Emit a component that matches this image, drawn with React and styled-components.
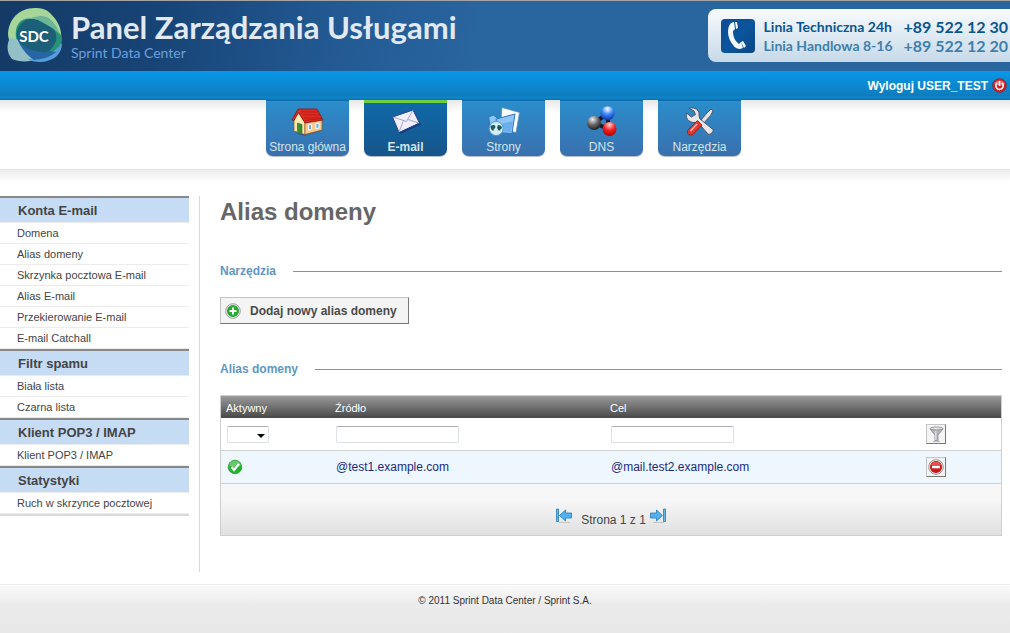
import React from "react";
import styled, { createGlobalStyle, css } from "styled-components";

const sans = '"Liberation Sans", Arial, sans-serif';
const brand = 'Lato, "Open Sans", sans-serif';

const GlobalStyle = createGlobalStyle`
  *, *::before, *::after { box-sizing: border-box; }
  body { margin: 0; background: #fff; color: #444; font: 12px/16px ${sans}; }
  a { color: inherit; text-decoration: none; }
  svg { display: block; flex: none; }
`;

const Page = styled.div`
  min-height: 100vh;
  display: flex;
  flex-direction: column;
`;

const Header = styled.header`
  height: 71px;
  border-top: 1px solid #a3a3a3;
  background: linear-gradient(100deg, #143a66 0, #174476 160px, #235a94 340px, #29659f 480px);
  display: flex;
  justify-content: space-between;
`;

const Brand = styled.a`
  display: flex;
  gap: 8px;
  padding: 6px 0 0 7px;
`;

const BrandText = styled.span`
  display: flex;
  flex-direction: column;
  padding-top: 3px;
`;

const BrandName = styled.span`
  color: #e2e9f3;
  font: 700 31px/35px ${brand};
  white-space: nowrap;
`;

const BrandSub = styled.span`
  color: #6d9fdb;
  font: 400 14px/16px ${brand};
  white-space: nowrap;
`;

const Contact = styled.div`
  height: 53px;
  margin-top: 8px;
  padding: 0 2px 0 13px;
  border-radius: 8px 0 0 8px;
  background: linear-gradient(#f8fbfd, #c6d9e8);
  display: flex;
  align-items: center;
  gap: 9px;
`;

const Lines = styled.dl`
  margin: 0;
  display: grid;
  grid-template-columns: auto auto;
  column-gap: 11px;
  white-space: nowrap;
`;

const LineName = styled.dt`
  color: ${(p) => (p.$soft ? "#3f7fab" : "#0a5590")};
  font: 700 14px/19px ${brand};
`;

const LineNumber = styled.dd`
  margin: 0;
  color: ${(p) => (p.$soft ? "#3f7fab" : "#0a5590")};
  font: 700 16px/19px ${brand};
`;

const UserBar = styled.div`
  height: 29px;
  padding: 0 3px;
  background: linear-gradient(#0798e8, #0f7cbd 86%, #0e86cd 92%, #0a6fae);
  display: flex;
  align-items: center;
  justify-content: flex-end;
`;

const Logout = styled.a`
  color: #fff;
  font-weight: 700;
  display: flex;
  align-items: center;
  gap: 4px;
`;

const Nav = styled.nav`
  height: 70px;
  padding-right: 3px;
  border-bottom: 1px solid #e2e2e2;
  background: linear-gradient(#e6e6e6, #fff 12px);
  display: flex;
  justify-content: center;
  align-items: flex-start;
  gap: 15px;
`;

const Tab = styled.a`
  width: 83px;
  height: 57px;
  padding-top: 5px;
  border-top: 1px solid #0f6fae;
  border-bottom: 1px solid #b4bfcb;
  border-radius: 0 0 7px 7px;
  background: linear-gradient(#2a8dcb, #3a70ae);
  color: #d3e4ea;
  display: flex;
  flex-direction: column;
  align-items: center;
  gap: 1px;
  white-space: nowrap;
  ${(p) =>
    p.$active &&
    css`
      padding-top: 3px;
      border-top: 3px solid #6fcf42;
      background: linear-gradient(#0f6aa8, #17548a);
      font-weight: 700;
    `}
`;

const Body = styled.div`
  padding: 26px 8px 12px 0;
  background: linear-gradient(#ececec, #fff 12px);
  display: flex;
`;

const Sidebar = styled.aside`
  width: 200px;
  min-height: 376px;
  padding-right: 10px;
  border-right: 1px solid #d9d9d9;
  flex: none;
`;

const Menu = styled.nav`
  border-bottom: 2px solid #d9d9d9;
`;

const MenuTitle = styled.h2`
  height: 27px;
  margin: 0;
  padding-left: 18px;
  border-top: 2px solid #888;
  border-bottom: 1px solid #ececec;
  background: #c5dcf4;
  font-size: 13px;
  line-height: 25px;
`;

const MenuList = styled.ul`
  margin: 0;
  padding: 0;
  list-style: none;
`;

const MenuItem = styled.li`
  height: 21px;
  padding-left: 17px;
  border-bottom: 1px solid #ececec;
  font-size: 11px;
  line-height: 21px;
`;

const Main = styled.main`
  flex: 1;
  min-width: 0;
  padding-left: 20px;
`;

const Title = styled.h1`
  margin: 0 0 35px;
  color: #666;
  font-size: 24px;
  line-height: 32px;
`;

const SectionTitle = styled.h2`
  margin: 0;
  color: #6096c6;
  font-size: 12px;
  line-height: 16px;
  display: flex;
  align-items: center;
  gap: 17px;
  &::after {
    content: "";
    height: 1px;
    background: #6699c4;
    flex: 1;
  }
`;

const AddButton = styled.button`
  height: 27px;
  margin: 18px 0 37px;
  padding: 0 11px 0 4px;
  border: 1px solid;
  border-color: #c4c4c4 #777 #777 #c4c4c4;
  background: #f4f4f4;
  color: #4a4a4a;
  font: 700 12px/16px ${sans};
  display: flex;
  align-items: center;
  gap: 9px;
`;

const Grid = styled.table`
  width: 100%;
  margin-top: 18px;
  border: 1px solid #cfcfcf;
  border-spacing: 0;
  table-layout: fixed;
  text-align: left;
`;

const Col = styled.col`
  width: ${(p) => p.$w};
`;

const HeadRow = styled.tr`
  height: 22px;
  background: linear-gradient(#9a9a9a, #484848);
  color: #fff;
`;

const HeadCell = styled.th`
  padding: 2px 5px 0;
  font-size: 11px;
  line-height: 16px;
  font-weight: 400;
`;

const Row = styled.tr`
  height: 33px;
  background: ${(p) => (p.$tinted ? "#eef6fe" : "#fff")};
`;

const Cell = styled.td`
  padding: 0 5px 0 6px;
  border-bottom: 1px solid #cfcfcf;
  color: #1a2b7c;
`;

const ActionCell = styled(Cell)`
  padding-left: 5px;
`;

const PagerCell = styled.td`
  height: 51px;
  padding: 16px 0 0;
  background: linear-gradient(#f7f7f7 30%, #e0e0e0);
`;

const Pager = styled.div`
  display: flex;
  justify-content: center;
  gap: 4px;
`;

const PagerText = styled.span`
  padding: 4px 0 0 5px;
`;

const field = css`
  height: 17px;
  border: 1px solid #dde0e8;
  border-top-color: #abadb3;
  border-radius: 2px;
  background: #fff;
  font: 11px/13px ${sans};
  display: block;
`;

const TextField = styled.input`
  ${field}
  width: 123px;
  padding: 0 3px;
`;

const SelectBox = styled.span`
  width: 42px;
  display: block;
  position: relative;
  svg { position: absolute; right: 4px; bottom: 4px; pointer-events: none; }
`;

const Select = styled.select`
  ${field}
  width: 100%;
  padding: 0 12px 0 3px;
  appearance: none;
`;

const IconButton = styled.button`
  width: 20px;
  height: 20px;
  padding: 0;
  border: 1px solid;
  border-color: #c4c4c4 #777 #777 #c4c4c4;
  background: #f4f4f4;
  display: flex;
  align-items: center;
  justify-content: center;
`;

const Footer = styled.footer`
  flex: 1;
  padding: 9px 0;
  border-top: 1px solid #ececec;
  background: linear-gradient(#fff 1px, #f9f9f9 1px, #ebebeb 20px, #e8e8e8);
  color: #333;
  font-size: 10px;
  line-height: 14px;
  text-align: center;
`;

const Logo = () => (
  <svg width="56" height="56" viewBox="0 0 56 56" aria-hidden="true">
    <path d="M1 26C2 12 12 1 28 1c6 0 11 1 15 5 6 6 10 12 11 20 1 9 0 14-3 18L40 49 12 45C4 38 1 34 1 26z" fill="#a6d698" />
    <path d="M9 26C10 18 13 12 22 11c5 0 7-2 12-2 8 0 12 6 15 10l5 10c1 9-4 16-10 18L15 46c-4-6-6-13-6-20z" fill="#6db597" />
    <path d="M12 16c4-5 10-5 17-3 9 3 17 8 25 15 2 8-2 16-9 19L21 48 10 36c-2-8-2-15 2-20z" fill="#29937a" />
    <path d="M3 31c9 0 19 6 26 22-8 2-18 2-24-1-5-5-6-14-2-21z" fill="#93bfc6" />
    <path d="M55 36c0 12-9 18-21 19-6 0-11-1-13-3 14-1 26-5 34-16z" fill="#559edb" />
    <path d="M9 27c8 8 22 15 40 18-7 6-14 7-22 8-7-4-17-17-18-26z" fill="#2766a5" />
    <path d="M17 14c5-3 10-2 14-1l14 8c4 3 5 8 4 13-2 5-5 9-9 11-8 1-17-2-24-6-5-5-7-10-6-15 1-4 4-8 7-10z" fill="#1b5f78" />
    <text x="27" y="35" textAnchor="middle" fill="#fff" fontFamily="Lato, sans-serif" fontWeight="700" fontSize="15">SDC</text>
  </svg>
);

const PhoneIcon = () => (
  <svg width="34" height="34" viewBox="0 0 34 34" aria-hidden="true">
    <defs>
      <linearGradient id="phone" x1="0" y1="0" x2="1" y2="1">
        <stop offset="0" stopColor="#0b4c94" />
        <stop offset=".5" stopColor="#0b559c" />
        <stop offset="1" stopColor="#0a4684" />
      </linearGradient>
    </defs>
    <rect width="34" height="34" rx="4" fill="url(#phone)" />
    <path d="M10 4l3-1 1 7-2 2c0 6 2 10 6 13l2-2 2 6-3 1c-2 0-5-1-7-4-3-4-5-8-5-13 0-4 1-7 3-9zM14 3h2l1 6-2 1zM20 23l2-1 3 5-2 2z" fill="#f4f8fc" />
  </svg>
);

const PowerIcon = () => (
  <svg width="15" height="15" viewBox="0 0 15 15" aria-hidden="true">
    <circle cx="7.500" cy="7.500" r="6.800" fill="#cf2229" stroke="#8c2a30" />
    <path d="M2 6a6 6 0 0 1 11 0c-3 2-8 2-11 0z" fill="#e86d6d" />
    <path d="M5 5a3.700 3.700 0 1 0 5 0M7.500 3v5" fill="none" stroke="#fff" strokeWidth="1.600" />
  </svg>
);

const HomeIcon = () => (
  <svg width="34" height="32" viewBox="0 0 34 32" aria-hidden="true">
    <path d="M4 27l9 3 17-5v-3z" fill="#143a66" opacity=".4" />
    <path d="M3 13l4-7 7 10v12.500L3 25z" fill="#ffe9b4" stroke="#8a5424" strokeWidth=".7" />
    <path d="M14 16l17-3v11l-17 4.500z" fill="#fbc98a" stroke="#8a5424" strokeWidth=".7" />
    <path d="M7 3h19l6 11-18 3L7.500 6.500 3 14.500 1 14z" fill="#df2b20" stroke="#7d1610" strokeWidth=".8" />
    <path d="M10 6h17M12 9h17M13 12h17M14 14.500l17-2" stroke="#a81812" strokeWidth=".7" />
    <path d="M6.500 17l4.500 1.500v8.500l-4.500-1.500z" fill="#37902a" stroke="#256a1b" strokeWidth=".6" />
    <path d="M17.500 19l3-.6v5l-3 .7zM25 17.600l3-.6v5l-3 .7z" fill="#5bb2ef" stroke="#fff" strokeWidth=".9" />
  </svg>
);

const MailIcon = () => (
  <svg width="34" height="32" viewBox="0 0 34 32" aria-hidden="true">
    <path d="M4.500 12L25 5l7 13.500L11 28z" fill="#10245f" opacity=".6" />
    <path d="M3.500 11L24 4l6.500 13L10 26.500z" fill="#f0effb" stroke="#24409b" />
    <path d="M4 11l13.500 4.500L24 4M10 26l4.500-11.500M30 17l-11-3.500" fill="none" stroke="#9a9fce" strokeWidth=".9" />
  </svg>
);

const PagesIcon = () => (
  <svg width="34" height="32" viewBox="0 0 34 32" aria-hidden="true">
    <path d="M15 1.500l17.500 5-3.500 20-16-3z" fill="#fff" stroke="#5a8fc0" strokeWidth=".8" />
    <path d="M1.500 11l5-2 3 2.500 5-.5v16l-10 1z" fill="#8bc5f7" stroke="#2a6fc0" />
    <path d="M9 13l19-5-3 19.500-14-1z" fill="#8fc6f8" stroke="#2f74c4" />
    <path d="M13 18l13-3-2 11-10-1z" fill="#4e9ae6" opacity=".55" />
    <circle cx="9.200" cy="22.500" r="7" fill="#d4edf7" stroke="#4b9cc8" />
    <path d="M3.500 20c3-2 5-1 5 1-1 2-2 2-2 4-2-1-3-2-3-5zM11 19c2 0 4 1 4 3l-3 3-2-3z" fill="#1c5a60" />
  </svg>
);

const DnsIcon = () => (
  <svg width="34" height="32" viewBox="0 0 34 32" aria-hidden="true">
    <defs>
      <radialGradient id="black" cx=".4" cy=".25" r=".8"><stop offset="0" stopColor="#eee" /><stop offset=".5" stopColor="#666" /><stop offset="1" stopColor="#161616" /></radialGradient>
      <radialGradient id="blue" cx=".5" cy=".2" r=".8"><stop offset="0" stopColor="#fff" /><stop offset=".5" stopColor="#3d86f5" /><stop offset="1" stopColor="#0a2eb0" /></radialGradient>
      <radialGradient id="red" cx=".5" cy=".2" r=".8"><stop offset="0" stopColor="#ffd5d0" /><stop offset=".5" stopColor="#f32020" /><stop offset="1" stopColor="#b00000" /></radialGradient>
    </defs>
    <path d="M9 17L22 8l2 15z" fill="none" stroke="#151c26" strokeWidth="4" />
    <circle cx="9" cy="17" r="7" fill="url(#black)" />
    <circle cx="22.500" cy="7.200" r="7" fill="url(#blue)" />
    <circle cx="24.500" cy="23" r="7" fill="url(#red)" />
  </svg>
);

const ToolsIcon = () => (
  <svg width="34" height="32" viewBox="0 0 34 32" aria-hidden="true">
    <path d="M28 3l2 2-2.500 4.500L19 19l-3-2.500 8-9.500z" fill="#e2e2e4" stroke="#444c5c" strokeWidth=".8" />
    <path d="M6 2c6-1 11 2 10 8l1 3 13 10.500c1 2-3 6-5 4.500L14.500 16C8 18 2 14 3.500 7l5 4 4-2.500L11 5z" fill="#e6e5ec" stroke="#444c5c" strokeWidth=".9" />
    <path d="M14.500 14.500l4.500 4.500-9 9.500c-3 2-7-1-5-4.500z" fill="#e23a30" stroke="#8d1712" strokeWidth=".8" />
    <path d="M14 18l-6.500 7" stroke="#f7b5af" strokeWidth="1.800" />
  </svg>
);

const PlusIcon = () => (
  <svg width="16" height="16" viewBox="0 0 16 16" aria-hidden="true">
    <circle cx="8" cy="8" r="7.300" fill="#e7e7e7" stroke="#a3a3a3" />
    <circle cx="8" cy="8" r="5.600" fill="#22b02c" stroke="#188a20" strokeWidth=".6" />
    <path d="M8 4.500v7M4.500 8h7" stroke="#fff" strokeWidth="2" />
  </svg>
);

const CheckIcon = () => (
  <svg width="16" height="16" viewBox="0 0 16 16" role="img" aria-label="Aktywny">
    <circle cx="8" cy="8" r="6.800" fill="#1fb32a" stroke="#23902e" strokeWidth=".7" />
    <path d="M2 6.500a6.200 6.200 0 0 1 12 0c-4 2-8 2-12 0z" fill="#69c86b" />
    <path d="M4.500 8l2.500 3 5-6" fill="none" stroke="#fff" strokeWidth="2.200" />
  </svg>
);

const FunnelIcon = () => (
  <svg width="16" height="16" viewBox="0 0 16 16" aria-hidden="true">
    <path d="M2 3l5 6v6h3V9l5-6z" fill="#b5b5bd" stroke="#85858c" strokeWidth=".8" />
    <ellipse cx="8.500" cy="2.500" rx="6.500" ry="1.500" fill="#e2e2e6" stroke="#85858c" strokeWidth=".8" />
    <path d="M7.800 5v9" stroke="#ececf0" />
    <path d="M5 15.500h7" stroke="#bbb" />
  </svg>
);

const RemoveIcon = () => (
  <svg width="16" height="16" viewBox="0 0 16 16" aria-hidden="true">
    <circle cx="8" cy="8" r="7.300" fill="#e6e2e2" stroke="#a09a9a" />
    <circle cx="8" cy="8" r="6" fill="#cd1719" />
    <path d="M2.500 6a6 6 0 0 1 11 0z" fill="#e05252" />
    <path d="M4 8h8" stroke="#fff" strokeWidth="2.600" />
  </svg>
);

const EdgeArrow = ({ last }) => (
  <svg width="16" height="16" viewBox="0 0 16 16" aria-hidden="true">
    <g transform={last ? "matrix(-1 0 0 1 16 0)" : undefined} stroke="#2479b8" strokeWidth=".8">
      <path d="M.5 1h2v12.500h-2z" fill="#64b8ee" />
      <path d="M3.500 7.500L9.500 2v3h6v5h-6v3z" fill="#4fb3f3" />
    </g>
    <path d="M3 14.500h11" stroke="#bbb" strokeWidth=".8" />
  </svg>
);

const TABS = [
  { label: "Strona główna", Icon: HomeIcon },
  { label: "E-mail", Icon: MailIcon, active: true },
  { label: "Strony", Icon: PagesIcon },
  { label: "DNS", Icon: DnsIcon },
  { label: "Narzędzia", Icon: ToolsIcon },
];

const MENU = [
  { title: "Konta E-mail", items: ["Domena", "Alias domeny", "Skrzynka pocztowa E-mail", "Alias E-mail", "Przekierowanie E-mail", "E-mail Catchall"] },
  { title: "Filtr spamu", items: ["Biała lista", "Czarna lista"] },
  { title: "Klient POP3 / IMAP", items: ["Klient POP3 / IMAP"] },
  { title: "Statystyki", items: ["Ruch w skrzynce pocztowej"] },
];

const ALIASES = [{ source: "@test1.example.com", target: "@mail.test2.example.com" }];

export default function App() {
  return (
    <Page>
      <GlobalStyle />
      <Header>
        <Brand href="#">
          <Logo />
          <BrandText>
            <BrandName>Panel Zarządzania Usługami</BrandName>
            <BrandSub>Sprint Data Center</BrandSub>
          </BrandText>
        </Brand>
        <Contact>
          <PhoneIcon />
          <Lines>
            <LineName>Linia Techniczna 24h</LineName>
            <LineNumber>+89 522 12 30</LineNumber>
            <LineName $soft>Linia Handlowa 8-16</LineName>
            <LineNumber $soft>+89 522 12 20</LineNumber>
          </Lines>
        </Contact>
      </Header>
      <UserBar>
        <Logout href="#">
          Wyloguj USER_TEST
          <PowerIcon />
        </Logout>
      </UserBar>
      <Nav>
        {TABS.map(({ label, Icon, active }) => (
          <Tab key={label} href="#" $active={active}>
            <Icon />
            <span>{label}</span>
          </Tab>
        ))}
      </Nav>
      <Body>
        <Sidebar>
          <Menu>
            {MENU.map(({ title, items }) => (
              <React.Fragment key={title}>
                <MenuTitle>{title}</MenuTitle>
                <MenuList>
                  {items.map((item) => (
                    <MenuItem key={item}>
                      <a href="#">{item}</a>
                    </MenuItem>
                  ))}
                </MenuList>
              </React.Fragment>
            ))}
          </Menu>
        </Sidebar>
        <Main>
          <Title>Alias domeny</Title>
          <SectionTitle>Narzędzia</SectionTitle>
          <AddButton type="button">
            <PlusIcon />
            Dodaj nowy alias domeny
          </AddButton>
          <SectionTitle>Alias domeny</SectionTitle>
          <Grid>
            <colgroup>
              <Col $w="109px" />
              <Col $w="275px" />
              <Col $w="auto" />
              <Col $w="80px" />
            </colgroup>
            <thead>
              <HeadRow>
                <HeadCell>Aktywny</HeadCell>
                <HeadCell>Źródło</HeadCell>
                <HeadCell>Cel</HeadCell>
                <HeadCell />
              </HeadRow>
            </thead>
            <tbody>
              <Row>
                <Cell>
                  <SelectBox>
                    <Select aria-label="Aktywny" />
                    <svg width="8" height="5" viewBox="0 0 8 5" aria-hidden="true">
                      <path d="M0 0h8L4 4z" fill="#000" />
                    </svg>
                  </SelectBox>
                </Cell>
                <Cell><TextField aria-label="Źródło" /></Cell>
                <Cell><TextField aria-label="Cel" /></Cell>
                <ActionCell>
                  <IconButton type="button" aria-label="Filtruj"><FunnelIcon /></IconButton>
                </ActionCell>
              </Row>
              {ALIASES.map(({ source, target }) => (
                <Row key={source} $tinted>
                  <Cell><CheckIcon /></Cell>
                  <Cell><a href="#">{source}</a></Cell>
                  <Cell><a href="#">{target}</a></Cell>
                  <ActionCell>
                    <IconButton type="button" aria-label="Usuń"><RemoveIcon /></IconButton>
                  </ActionCell>
                </Row>
              ))}
            </tbody>
            <tfoot>
              <tr>
                <PagerCell colSpan={4}>
                  <Pager>
                    <a href="#" aria-label="Pierwsza strona"><EdgeArrow /></a>
                    <PagerText>Strona 1 z 1</PagerText>
                    <a href="#" aria-label="Ostatnia strona"><EdgeArrow last /></a>
                  </Pager>
                </PagerCell>
              </tr>
            </tfoot>
          </Grid>
        </Main>
      </Body>
      <Footer>© 2011 Sprint Data Center / Sprint S.A.</Footer>
    </Page>
  );
}
